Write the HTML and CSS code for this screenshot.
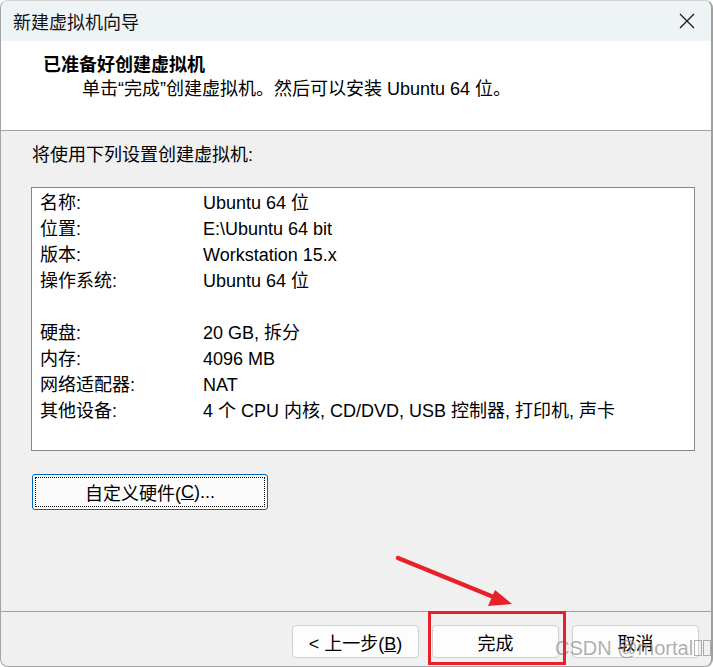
FILE: index.html
```html
<!DOCTYPE html>
<html lang="zh-CN">
<head>
<meta charset="utf-8">
<title>新建虚拟机向导</title>
<link rel="stylesheet" href="styles.css">
</head>
<body>
<div class="window">
  <div class="titlebar">
    <span class="title">新建虚拟机向导</span>
    <svg class="close" width="16" height="16" viewBox="0 0 16 16"><path d="M1 1 L15 15 M15 1 L1 15" stroke="#1a1a1a" stroke-width="1.3" fill="none"/></svg>
  </div>
  <div class="header">
    <div class="h-title">已准备好创建虚拟机</div>
    <div class="h-sub">单击“完成”创建虚拟机。然后可以安装 Ubuntu 64 位。</div>
  </div>
  <div class="content">
    <div class="intro">将使用下列设置创建虚拟机:</div>
    <div class="listbox">
      <div class="row"><span class="k">名称:</span><span class="v">Ubuntu 64 位</span></div>
      <div class="row"><span class="k">位置:</span><span class="v">E:\Ubuntu 64 bit</span></div>
      <div class="row"><span class="k">版本:</span><span class="v">Workstation 15.x</span></div>
      <div class="row"><span class="k">操作系统:</span><span class="v">Ubuntu 64 位</span></div>
      <div class="row"><span class="k"></span><span class="v"></span></div>
      <div class="row"><span class="k">硬盘:</span><span class="v">20 GB, 拆分</span></div>
      <div class="row"><span class="k">内存:</span><span class="v">4096 MB</span></div>
      <div class="row"><span class="k">网络适配器:</span><span class="v">NAT</span></div>
      <div class="row"><span class="k">其他设备:</span><span class="v">4 个 CPU 内核, CD/DVD, USB 控制器, 打印机, 声卡</span></div>
    </div>
    <button class="custom"><span class="focus">自定义硬件(<u>C</u>)...</span></button>
  </div>
  <div class="footer">
    <button class="btn">&lt; 上一步(<u>B</u>)</button>
    <button class="btn">完成</button>
    <button class="btn">取消</button>
    <div class="watermark">CSDN @mortal<span class="tofu"></span><span class="tofu"></span><span class="tofu"></span></div>
  </div>
  <svg class="annot" width="713" height="667" viewBox="0 0 713 667">
    <rect x="429.5" y="612.5" width="135" height="51" fill="none" stroke="#e8202a" stroke-width="3"/>
    <line x1="398" y1="558" x2="496" y2="598" stroke="#e8202a" stroke-width="4.5" stroke-linecap="round"/>
    <polygon points="512,604 495,590 488,606" fill="#e8202a"/>
  </svg>
</div>
</body>
</html>
```
FILE: styles.css
```css
html, body {
  margin: 0;
  padding: 0;
  background: #ffffff;
}
body {
  font-family: "Liberation Sans", "Noto Sans CJK SC", sans-serif;
  font-size: 18px;
  color: #000;
}
.window {
  position: relative;
  width: 713px;
  height: 667px;
  box-sizing: border-box;
  border-left: 1px solid #a4a4a4;
  border-right: 2px solid #a0a0a0;
  border-bottom: 1px solid #a4a4a4;
  border-top: 1px solid #d0d0d0;
  border-radius: 8px;
  overflow: hidden;
  background: #f0f0f0;
  display: flex;
  flex-direction: column;
}
.titlebar {
  height: 40px;
  background: #eef3f6;
  display: flex;
  align-items: center;
  justify-content: space-between;
  padding: 0 16px 0 12px;
  flex: none;
}
.title {
  font-family: "Noto Sans CJK SC", sans-serif;
  font-size: 18px;
  line-height: 40px;
  color: #111;
}
.close {
  display: block;
  margin-top: 0;
}
.header {
  height: 90px;
  box-sizing: border-box;
  background: #fff;
  border-bottom: 1px solid #a0a0a0;
  padding: 12px 0 0 42px;
  flex: none;
}
.h-title {
  font-weight: bold;
  line-height: 24px;
}
.h-sub {
  line-height: 24px;
  margin-left: 39px;
}
.content {
  flex: 1;
  padding: 12px 0 0 31px;
  box-sizing: border-box;
}
.intro {
  line-height: 24px;
}
.listbox {
  margin-top: 20px;
  margin-left: -1px;
  width: 664px;
  height: 264px;
  box-sizing: border-box;
  border: 1px solid #828790;
  background: #fff;
  padding: 2px 0 0 8px;
}
.row {
  display: flex;
  height: 26px;
  line-height: 26px;
}
.k {
  width: 163px;
  flex: none;
}
.custom {
  margin-top: 23px;
  width: 236px;
  height: 36px;
  box-sizing: border-box;
  border: 1px solid #0067c0;
  border-radius: 3px;
  background: #fbfbfb;
  padding: 2px;
  font: inherit;
  color: #000;
  display: block;
}
.focus {
  display: flex;
  align-items: center;
  justify-content: center;
  height: 100%;
  box-sizing: border-box;
  border: 1px dotted #000;
}
.footer {
  position: relative;
  height: 55px;
  flex: none;
  border-top: 1px solid #a0a0a0;
  box-sizing: border-box;
  display: flex;
  justify-content: flex-end;
  align-items: flex-start;
  gap: 13px;
  padding: 13px 12px 0 0;
}
.btn {
  width: 127px;
  height: 33px;
  box-sizing: border-box;
  border: 1px solid #d0d0d0;
  border-radius: 4px;
  background: #fdfdfd;
  font: inherit;
  color: #000;
  padding: 0;
}
.watermark {
  position: absolute;
  left: 554px;
  top: 24px;
  font-family: "Liberation Sans", sans-serif;
  font-size: 20px;
  line-height: 24px;
  color: rgba(150, 150, 150, 0.75);
  white-space: nowrap;
  display: flex;
  align-items: center;
}
.tofu {
  display: inline-block;
  width: 6px;
  height: 14px;
  border: 1px solid rgba(150, 150, 150, 0.75);
  margin-left: 1px;
}
.annot {
  position: absolute;
  left: -1px;
  top: -1px;
  pointer-events: none;
}
```
